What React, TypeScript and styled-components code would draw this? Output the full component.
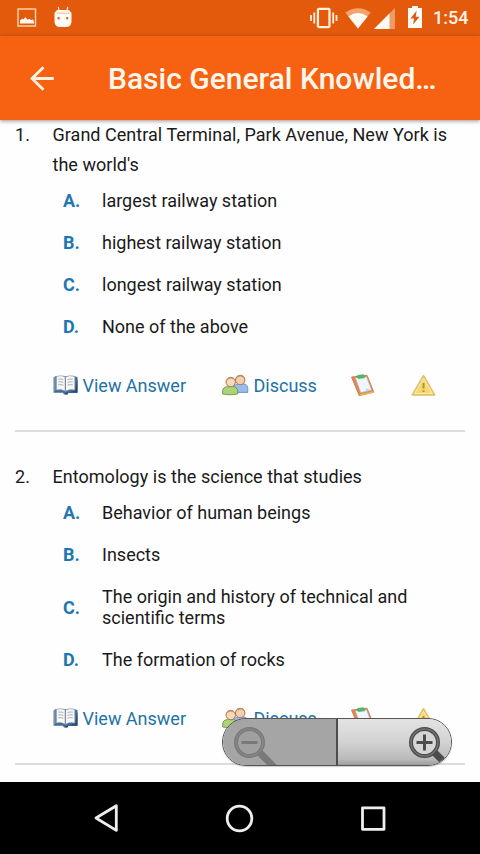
import React from "react";
import styled, { createGlobalStyle } from "styled-components";

const GlobalStyle = createGlobalStyle`
  * { box-sizing: border-box; }
  html, body { margin: 0; padding: 0; background: #fff; overflow: hidden; }
  body { font-family: Roboto, "Liberation Sans", sans-serif; color: #1a1a1a; }
`;

const Screen = styled.div`
  position: relative;
  display: flex;
  flex-direction: column;
  width: 480px;
  height: 854px;
  overflow: hidden;
  background: #fefefe;
`;

const StatusBar = styled.div`
  display: flex;
  align-items: center;
  flex: none;
  height: 36px;
  padding: 0 12px 0 17px;
  background: #e35a0d;
  color: #fff3e6;
`;

const StatusGroup = styled.div<{ $end?: boolean }>`
  display: flex;
  align-items: center;
  margin-left: ${(p) => (p.$end ? "auto" : "0")};
`;

const Clock = styled.span`
  width: 35px;
  margin-left: 11px;
  font-size: 18px;
  font-weight: 500;
  line-height: 38px;
  white-space: nowrap;
`;

const AppBar = styled.header`
  position: relative;
  z-index: 1;
  display: flex;
  align-items: center;
  flex: none;
  height: 84px;
  padding-left: 30px;
  background: #f66212;
  color: #fff6ec;
  box-shadow: 0 1px 4px rgba(60, 30, 30, 0.5);
`;

const Title = styled.h1`
  margin: 1px 0 0 54px;
  font-size: 30px;
  font-weight: 500;
  line-height: 36px;
  white-space: nowrap;
`;

const Content = styled.main`
  flex: 1;
  min-height: 0;
  padding: 0 15px;
  overflow: hidden;
  font-size: 18px;
`;

const Question = styled.section`
  display: flex;
  margin-bottom: 30px;
  border-bottom: 2px solid #dcdcdc;
`;

const QuestionNumber = styled.div`
  flex: none;
  width: 37.5px;
  line-height: 30px;
`;

const QuestionBody = styled.div`
  flex: 1;
  min-width: 0;
`;

const Prompt = styled.div`
  line-height: 30px;
  letter-spacing: 0.03px;
  white-space: pre-line;
`;

const Option = styled.div`
  display: flex;
  align-items: center;
  padding: 10px 0 11px 10.5px;
  line-height: 21px;
`;

const Letter = styled.span`
  flex: none;
  width: 39px;
  font-weight: 700;
  color: #1f76b0;
`;

const OptionText = styled.span`
  white-space: pre-line;
`;

const Actions = styled.div`
  display: flex;
  align-items: center;
  height: 82px;
  padding-bottom: 8px;
  color: #1f72a5;
`;

const Action = styled.a<{ $width: number }>`
  display: flex;
  align-items: center;
  flex: none;
  width: ${(p) => p.$width}px;
  white-space: nowrap;

  svg { flex: none; }
`;

const ActionLabel = styled.span`
  margin-left: 5px;
`;

const ZoomControls = styled.div`
  position: absolute;
  left: 222px;
  top: 718px;
  z-index: 2;
  display: flex;
  width: 230px;
  height: 48px;
  overflow: hidden;
  border: 1px solid #555;
  border-radius: 24px;
  box-shadow: 0 1px 1px rgba(0, 0, 0, 0.2);
`;

const ZoomButton = styled.button<{ $disabled?: boolean }>`
  display: flex;
  align-items: center;
  justify-content: ${(p) => (p.$disabled ? "flex-start" : "flex-end")};
  flex: none;
  width: ${(p) => (p.$disabled ? 115 : 113)}px;
  height: 46px;
  padding: ${(p) => (p.$disabled ? "0 0 0 9px" : "0 4px 0 0")};
  border: 0;
  border-right: ${(p) => (p.$disabled ? "2px solid #4d4d4d" : "0")};
  background: ${(p) =>
    p.$disabled ? "#a5a5a5" : "linear-gradient(#e3e3e3, #d4d4d4 48%, #b9b9b9 88%, #9c9c9c)"};

  svg { flex: none; overflow: visible; }
`;

const NavBar = styled.nav`
  display: flex;
  align-items: center;
  justify-content: space-between;
  flex: none;
  height: 72px;
  padding: 0 93px 0 92px;
  background: #000;
`;

const PictureIcon = () => (
  <svg width="20" height="20" viewBox="0 0 20 20">
    <rect x="1" y="1" width="17.5" height="17" fill="none" stroke="#ffd9ae" strokeWidth="1.4" />
    <path d="M3 15.5V12.6l2.2-1.8 1.6.5 1.4-2.2 2.4 2.6 2-1 1.6 1.3 1.8-.5 1 2.5v1.5z" fill="#fff8ed" />
  </svg>
);

const RobotIcon = () => (
  <svg width="20" height="24" viewBox="0 0 20 24">
    <path d="M5.2 2l1 4M14.8 2l-1 4" stroke="#ffe3c6" strokeWidth="1.2" />
    <path d="M4 5h12l2.5 3v9q-.5 5-5.5 5H7q-5 0-5.5-5V8z" fill="#fffaf3" />
    <path d="M3.5 8.2h13" stroke="#f2bc92" strokeWidth="1" />
    <circle cx="5.6" cy="13.2" r="1.2" fill="#d96a35" />
    <circle cx="14.2" cy="13.2" r="1.2" fill="#d96a35" />
  </svg>
);

const VibrateIcon = () => (
  <svg width="28" height="22" viewBox="0 0 28 22">
    <rect x="7.9" y="1.9" width="11.6" height="18.2" rx="1" fill="none" stroke="#fff0dc" strokeWidth="2.3" />
    <path d="M4.3 5.5v11M1 8v6M23.2 5.5v11M26.5 8v6" stroke="#fff0dc" strokeWidth="1.8" />
  </svg>
);

const WifiIcon = () => (
  <svg width="26" height="21" viewBox="0 0 26 21">
    <path d="M13 20.5L.3 4.6Q13-4 25.7 4.6z" fill="#f4a36d" />
    <path d="M13 20.5L3.4 8.4Q13 1.7 22.6 8.4z" fill="#fffaf3" />
  </svg>
);

const SignalIcon = () => (
  <svg width="21" height="21" viewBox="0 0 21 21">
    <path d="M0 21L21 0v21z" fill="#f09a65" />
    <path d="M0 21L15.5 5.5V21z" fill="#fffaf3" />
  </svg>
);

const BatteryIcon = () => (
  <svg width="14" height="22" viewBox="0 0 14 22">
    <path d="M0 2h4V0h6v2h4v20H0z" fill="#fffaf3" />
    <path d="M8.6 4.7L2.5 12.5h3.6l-1 6 6.4-7.8H7.7z" fill="#d55b1c" />
  </svg>
);

const BackIcon = () => (
  <svg width="24" height="25" viewBox="0 0 24 25">
    <path d="M13.5 1.3L2 12.5l11.5 11.2M2 12.5h21.8" fill="none" stroke="#fff1e2" strokeWidth="2.8" />
  </svg>
);

const BookIcon = () => (
  <svg width="25" height="22" viewBox="0 0 25 22">
    <path d="M.7 3.2l2-1H22l2.5 1v15.5h-9L14 20.5h-3l-1-1.8H.7z" fill="#416b98" />
    <path d="M.7 3.2l2-.8V16l-2 2.7z" fill="#7893b1" />
    <path d="M22 16.5l2.5-12v14.2h-9l-1 1.8h-2.2v-1.2z" fill="#234b79" />
    <path d="M3.4 2.5Q9 .7 12.4 3.3v14Q8.5 14.7 3.4 16zM12.4 3.3Q16 .7 21.8 2.5V16q-5.5-1.3-9.4 1.3z" fill="#f7f8f6" stroke="#899cab" strokeWidth=".7" />
    <path d="M5.2 5.2q3-.7 5.2.5M5.2 8q3-.7 5.2.5M5.2 10.8q3-.7 5.2.5M14.4 5.7q2.5-1.2 5.4-.5M14.4 8.5q2.5-1.2 5.4-.5M14.4 11.3q2.5-1.2 5.4-.5" fill="none" stroke="#b2b4b2" strokeWidth="1" />
    <path d="M12.4 3.5v14" stroke="#788b9c" />
  </svg>
);

const PeopleIcon = () => (
  <svg width="27" height="22" viewBox="0 0 27 22">
    <path d="M12 18.4v-5q.4-3.5 5-3.6h4q4.6.3 4.8 4.5v4.1z" fill="#9abcea" stroke="#6f8db5" strokeWidth=".9" />
    <circle cx="18.2" cy="6" r="4.7" fill="#f2cfad" stroke="#aa7956" strokeWidth="1" />
    <path d="M13.5 5q1-4 4.7-4 4.1 0 4.9 4.2-2-3-4.6-3-2.6 0-5 2.8z" fill="#b98964" />
    <path d="M.6 20v-3q.3-4.2 5.2-4.4h5q4.7.4 4.9 4.4v3q-7.5 1.7-15.1 0z" fill="#acd477" stroke="#729453" strokeWidth=".9" />
    <circle cx="8.7" cy="8" r="4.7" fill="#f5d9b9" stroke="#aa7956" strokeWidth="1" />
    <path d="M4.2 7q1-3.8 4.5-3.8 3.7 0 4.7 3.8-2-2.6-4.6-2.6T4.2 7z" fill="#c29370" />
  </svg>
);

const ClipboardIcon = () => (
  <svg width="25" height="23" viewBox="0 0 25 23">
    <path d="M.5 3L16 1.2l6.9 17-14.7 3.5z" fill="#e28a4e" stroke="#cb704b" strokeWidth=".8" />
    <path d="M8.8 20.4l13.7-3.1.4 1.4-13.8 3.1z" fill="#e7bd58" />
    <path d="M4.3 3.8L15.4 2.5l5.2 13.6-10.8 2.6z" fill="#f1f5fc" stroke="#a7b6ce" strokeWidth=".6" />
    <path d="M14.6 17.6l.5-3.2 5.6 1.5z" fill="#c2d3ed" />
    <path d="M5.4 2.7l1.7-1.4 5.4-.6 1.5 1.5-.4 1.6-6.3.8z" fill="#52b866" stroke="#48a05e" strokeWidth=".6" />
  </svg>
);

const WarningIcon = () => (
  <svg width="26" height="23" viewBox="0 0 26 23">
    <path d="M12.5 1.7L23.8 21H1.2z" fill="#f7df7b" stroke="#dfb968" strokeWidth="1.4" strokeLinejoin="round" />
    <path d="M12.5 4.5L21.2 19.5H3.8z" fill="#f3d96e" stroke="#fbebaa" strokeWidth=".9" />
    <path d="M12.5 9v5.6M12.5 16.2v1.7" stroke="#b39438" strokeWidth="2" />
  </svg>
);

const ZoomIcon = ({ plus }: { plus?: boolean }) => {
  const ink = plus ? "#4b4b4b" : "#797979";
  return (
    <svg width="40" height="46" viewBox="0 0 40 46">
      <path d="M26 32L42 48" stroke={ink} strokeWidth="7" />
      <circle cx="17.5" cy="23.5" r="13.5" fill={plus ? "#d5d5d5" : "#a0a0a0"} stroke={ink} strokeWidth="4" />
      <circle cx="17.5" cy="23.5" r="13.5" fill="none" stroke={plus ? "#727272" : "#868686"} strokeWidth="1.6" />
      <path d={plus ? "M9.5 23.5h16M17.5 15.5v16" : "M9.5 23.5h16"} stroke={ink} strokeWidth="3" />
    </svg>
  );
};

type QuestionData = { prompt: string; options: string[] };

const questions: QuestionData[] = [
  {
    prompt: "Grand Central Terminal, Park Avenue, New York is\nthe world's",
    options: ["largest railway station", "highest railway station", "longest railway station", "None of the above"],
  },
  {
    prompt: "Entomology is the science that studies",
    options: [
      "Behavior of human beings",
      "Insects",
      "The origin and history of technical and\nscientific terms",
      "The formation of rocks",
    ],
  },
];

const StatusIcon = styled.span<{ $gap: number; $shift?: number }>`
  display: flex;
  margin-left: ${(p) => p.$gap}px;
  padding-bottom: ${(p) => p.$shift ?? 0}px;
`;

export default function App() {
  return (
    <Screen>
      <GlobalStyle />
      <StatusBar>
        <StatusGroup>
          <StatusIcon $gap={0}><PictureIcon /></StatusIcon>
          <StatusIcon $gap={16} $shift={3}><RobotIcon /></StatusIcon>
        </StatusGroup>
        <StatusGroup $end>
          <StatusIcon $gap={0}><VibrateIcon /></StatusIcon>
          <StatusIcon $gap={7}><WifiIcon /></StatusIcon>
          <StatusIcon $gap={3}><SignalIcon /></StatusIcon>
          <StatusIcon $gap={13} $shift={2}><BatteryIcon /></StatusIcon>
          <Clock>1:54</Clock>
        </StatusGroup>
      </StatusBar>
      <AppBar>
        <BackIcon />
        <Title>Basic General Knowled…</Title>
      </AppBar>
      <Content>
        {questions.map((q, i) => (
          <Question key={q.prompt}>
            <QuestionNumber>{i + 1}.</QuestionNumber>
            <QuestionBody>
              <Prompt>{q.prompt}</Prompt>
              {q.options.map((text, n) => (
                <Option key={text}>
                  <Letter>{"ABCD"[n]}.</Letter>
                  <OptionText>{text}</OptionText>
                </Option>
              ))}
              <Actions>
                <Action $width={169}><BookIcon /><ActionLabel>View Answer</ActionLabel></Action>
                <Action $width={129}><PeopleIcon /><ActionLabel>Discuss</ActionLabel></Action>
                <Action $width={60}><ClipboardIcon /></Action>
                <Action $width={26}><WarningIcon /></Action>
              </Actions>
            </QuestionBody>
          </Question>
        ))}
      </Content>
      <NavBar>
        <svg width="28" height="30" viewBox="0 0 28 30">
          <path d="M24.3 2.8v24.6L4 15z" fill="none" stroke="#eee" strokeWidth="2.8" strokeLinejoin="round" />
        </svg>
        <svg width="30" height="30" viewBox="0 0 30 30">
          <circle cx="14.5" cy="15.5" r="12.3" fill="none" stroke="#eee" strokeWidth="2.8" />
        </svg>
        <svg width="28" height="30" viewBox="0 0 28 30">
          <rect x="3.5" y="4.8" width="21.5" height="21.5" fill="none" stroke="#eee" strokeWidth="2.8" strokeLinejoin="round" />
        </svg>
      </NavBar>
      <ZoomControls>
        <ZoomButton $disabled aria-label="Zoom out"><ZoomIcon /></ZoomButton>
        <ZoomButton aria-label="Zoom in"><ZoomIcon plus /></ZoomButton>
      </ZoomControls>
    </Screen>
  );
}
